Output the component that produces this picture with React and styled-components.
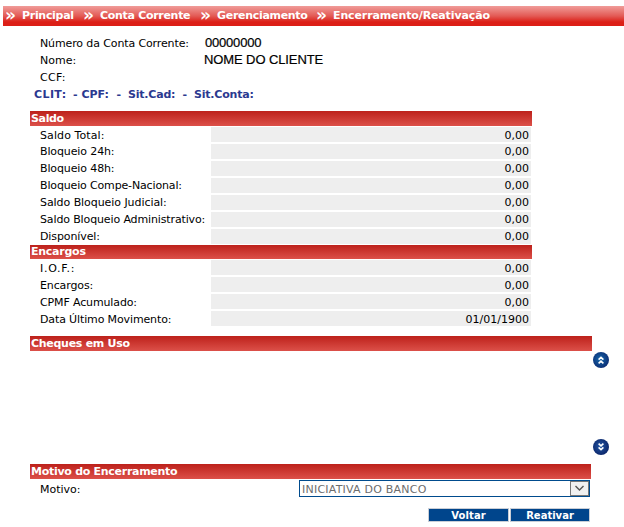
import React from "react";
import styled, { createGlobalStyle } from "styled-components";

const Global = createGlobalStyle`
  * { box-sizing: border-box; }
  body {
    margin: 0;
    background: #fff;
    color: #000;
    font: 11px/15px "DejaVu Sans", Verdana, sans-serif;
    overflow: hidden;
  }
`;

const Page = styled.main`
  width: 624px;
  height: 527px;
  padding-top: 6px;
`;

const Breadcrumb = styled.nav`
  display: flex;
  height: 20px;
  margin-left: 3px;
  padding-left: 2px;
  line-height: 20px;
  font-weight: bold;
  color: #fff;
  white-space: pre;
  background: linear-gradient(#f09c99 0%, #e35a55 50%, #dc1f17 80%, #dc1f17 100%);
`;

const Crumb = styled.span`
  flex: none;
  width: ${(p) => p.$width}px;
  display: flex;
`;

const Chevrons = styled.span`
  width: 17px;
  letter-spacing: -1px;
  font-size: 10px;
  line-height: 19px;
  font-size: 17px;
`;

const CrumbText = styled.span`
  letter-spacing: ${(p) => p.$spacing}px;
`;

const Client = styled.section`
  padding: 9px 0 0 40px;
  height: 85px;
`;

const ClientRow = styled.div`
  display: flex;
  height: 17px;
  line-height: 17px;
  white-space: pre;
`;

const ClientLabel = styled.span`
  width: ${(p) => p.$width || 165}px;
  letter-spacing: ${(p) => p.$spacing || 0}px;
`;

const ClientValue = styled.span`
  font: 13px/16px "Liberation Sans", Arial, sans-serif;
  -webkit-text-stroke: 0.2px #000;
  letter-spacing: ${(p) => p.$spacing}px;
`;

const Status = styled.div`
  display: flex;
  margin-left: -6px;
  line-height: 17px;
  font-weight: bold;
  color: #2b3990;
`;

const StatusPart = styled.span`
  flex: none;
  width: ${(p) => p.$width}px;
  letter-spacing: ${(p) => p.$spacing || 0}px;
  white-space: pre;
`;

const Bar = styled.h2`
  width: ${(p) => p.$width || 502}px;
  height: ${(p) => p.$height || 15}px;
  margin: 0 0 0 30px;
  padding-left: 1px;
  font-size: 11px;
  line-height: ${(p) => p.$height || 16}px;
  letter-spacing: ${(p) => p.$spacing || 0}px;
  color: #fff;
  background: linear-gradient(#bd211b, #dc5049);
`;

const Rows = styled.div`
  display: grid;
  grid-auto-rows: 15px;
  row-gap: 2px;
  margin-left: 40px;
  padding-top: 1px;
  padding-bottom: ${(p) => p.$after || 0}px;
`;

const Row = styled.div`
  display: grid;
  grid-template: 15px / 171px 320px;
  line-height: ${(p) => (p.$low ? 17 : 15)}px;
`;

const Label = styled.span`
  letter-spacing: ${(p) => p.$spacing || 0}px;
  white-space: nowrap;
`;

const Value = styled.span`
  padding-right: 2px;
  text-align: right;
  background: #eee;
`;

const Cheques = styled.section`
  margin-top: 10px;
  height: 128px;
`;

const Scroller = styled.div`
  display: flex;
  flex-direction: column;
  justify-content: space-between;
  width: 16px;
  height: 103px;
  margin: 1px 0 0 593px;
`;

const ScrollButton = styled.button`
  display: block;
  width: 16px;
  height: 16px;
  padding: 0;
  border: 0;
  border-radius: 50%;
  background: radial-gradient(circle at 45% 45%, ${(p) => p.$inner}, ${(p) => p.$outer} 75%);

  svg { display: block; }
`;

const ReasonRow = styled.div`
  display: flex;
  height: 19px;
  margin: 1px 0 0 40px;
  line-height: 19px;
`;

const SelectBox = styled.div`
  display: flex;
  justify-content: space-between;
  width: 291px;
  height: 17px;
  margin-left: auto;
  margin-right: 34px;
  padding-left: 2px;
  border: 1px solid #004b8d;
  line-height: 17px;
  color: #6d6d6d;
`;

const SelectText = styled.span`
  letter-spacing: ${(p) => p.$spacing}px;
`;

const Drop = styled.span`
  display: grid;
  place-items: center;
  width: 19px;
  height: 15px;
  border: 1px solid #777;
  background: #f0f0f0;
`;

const Actions = styled.div`
  display: flex;
  justify-content: flex-end;
  gap: 1px;
  margin: 9px 34px 0 0;
`;

const Action = styled.button`
  width: ${(p) => p.$width}px;
  height: 14px;
  padding: 1px 0 0;
  border: 1px solid #c9ced6;
  background: #00458c;
  color: #fff;
  font: bold 10px/12px "DejaVu Sans", Verdana, sans-serif;
  letter-spacing: ${(p) => p.$spacing || 0}px;
`;

const crumbs = [
  ["Principal", 78, -0.3],
  ["Conta Corrente", 117, -0.3],
  ["Gerenciamento", 116, -0.3],
  ["Encerramento/Reativação", 190, -0.12],
];

const balances = [
  ["Saldo Total:", 0.1],
  ["Bloqueio 24h:", -0.12],
  ["Bloqueio 48h:", -0.12],
  ["Bloqueio Compe-Nacional:", -0.15],
  ["Saldo Bloqueio Judicial:", -0.06],
  ["Saldo Bloqueio Administrativo:", -0.13],
  ["Disponível:", -0.1],
];

const charges = [
  ["I.O.F.:", "0,00", 0.7],
  ["Encargos:", "0,00", -0.12],
  ["CPMF Acumulado:", "0,00", -0.13],
  ["Data Último Movimento:", "01/01/1900", -0.13],
];

function Arrows({ down }) {
  return (
    <svg width="16" height="16" viewBox="0 0 16 16" fill="none" stroke="#fff" strokeWidth="1.6">
      <path
        d={down ? "M5.6 4.6 8 6.8l2.4-2.2M5.6 8.4 8 10.6l2.4-2.2" : "M5.6 7.6 8 5.4l2.4 2.2M5.6 11.4 8 9.2l2.4 2.2"}
      />
    </svg>
  );
}

export default function App() {
  return (
    <Page>
      <Global />
      <Breadcrumb>
        {crumbs.map(([text, width, spacing]) => (
          <Crumb key={text} $width={width}>
            <Chevrons>»</Chevrons>
            <CrumbText $spacing={spacing}>{text}</CrumbText>
          </Crumb>
        ))}
      </Breadcrumb>
      <Client>
        <ClientRow>
          <ClientLabel $spacing={-0.12}>Número da Conta Corrente:</ClientLabel>
          <ClientValue $spacing={-0.2}>00000000</ClientValue>
        </ClientRow>
        <ClientRow>
          <ClientLabel $width={164}>Nome:</ClientLabel>
          <ClientValue $spacing={-0.1}>NOME DO CLIENTE</ClientValue>
        </ClientRow>
        <ClientRow>
          <ClientLabel $spacing={0.3}>CCF:</ClientLabel>
        </ClientRow>
        <Status>
          <StatusPart $width={39} $spacing={0.4}>CLIT:</StatusPart>
          <StatusPart $width={55}>- CPF:  -</StatusPart>
          <StatusPart $width={66} $spacing={-0.2}>Sit.Cad:  -</StatusPart>
          <StatusPart $width={70} $spacing={-0.2}>Sit.Conta:</StatusPart>
        </Status>
      </Client>

      <Bar $spacing={-0.35}>Saldo</Bar>
      <Rows $after={1}>
        {balances.map(([label, spacing], i) => (
          <Row key={label} $low={i === 0}>
            <Label $spacing={spacing}>{label}</Label>
            <Value>0,00</Value>
          </Row>
        ))}
      </Rows>
      <Bar $height={14} $spacing={-0.25}>Encargos</Bar>
      <Rows>
        {charges.map(([label, value, spacing]) => (
          <Row key={label} $low>
            <Label $spacing={spacing}>{label}</Label>
            <Value>{value}</Value>
          </Row>
        ))}
      </Rows>

      <Cheques>
        <Bar $width={562} $spacing={-0.28}>Cheques em Uso</Bar>
        <Scroller>
          <ScrollButton aria-label="Subir" $inner="#1769ad" $outer="#0b2c72">
            <Arrows />
          </ScrollButton>
          <ScrollButton aria-label="Descer" $inner="#2458a5" $outer="#0a2468">
            <Arrows down />
          </ScrollButton>
        </Scroller>
      </Cheques>

      <Bar $width={561} $spacing={-0.28}>Motivo do Encerramento</Bar>
      <ReasonRow>
        <Label>Motivo:</Label>
        <SelectBox>
          <SelectText $spacing={0.22}>INICIATIVA DO BANCO</SelectText>
          <Drop>
            <svg width="11" height="7" viewBox="0 0 11 7" fill="none" stroke="#555" strokeWidth="1.4">
              <path d="M1.5 1 5.5 5l4-4" />
            </svg>
          </Drop>
        </SelectBox>
      </ReasonRow>
      <Actions>
        <Action $width={81} $spacing={0.1}>Voltar</Action>
        <Action $width={80} $spacing={0}>Reativar</Action>
      </Actions>
    </Page>
  );
}
